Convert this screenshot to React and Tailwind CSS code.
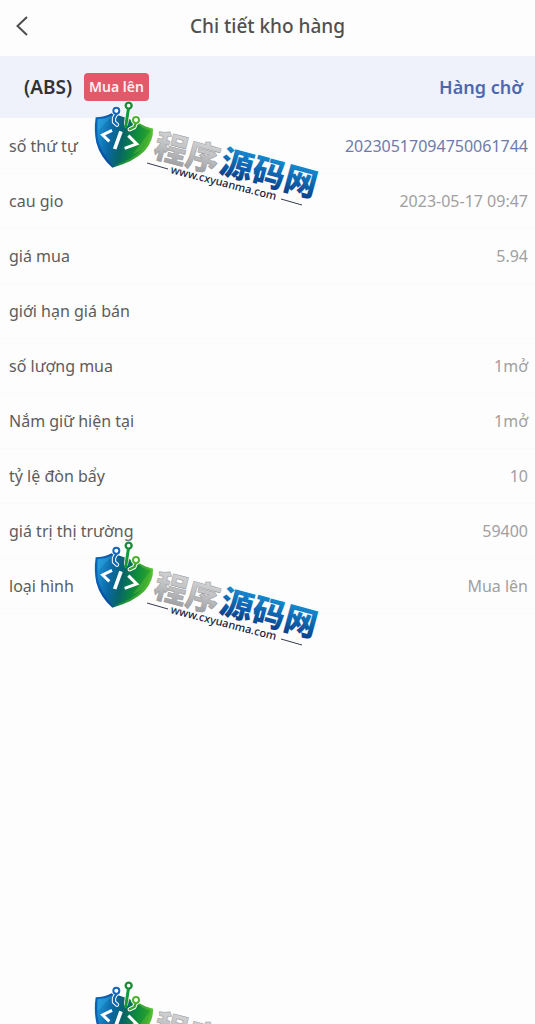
import React from "react";

const rows = [
  { label: "số thứ tự", value: "20230517094750061744", accent: true },
  { label: "cau gio", value: "2023-05-17 09:47" },
  { label: "giá mua", value: "5.94" },
  { label: "giới hạn giá bán", value: "" },
  { label: "số lượng mua", value: "1mở" },
  { label: "Nắm giữ hiện tại", value: "1mở" },
  { label: "tỷ lệ đòn bẩy", value: "10" },
  { label: "giá trị thị trường", value: "59400" },
  { label: "loại hình", value: "Mua lên" },
];

function Watermark({ id }) {
  const blue = `${id}-blue`;
  const silver = `${id}-silver`;
  const rim = `${id}-rim`;
  const face = `${id}-face`;
  return (
    <svg width="240" height="115" viewBox="0 0 240 115" aria-hidden="true">
      <defs>
        <linearGradient id={blue} x1="0" y1="0" x2="0" y2="1">
          <stop offset="0.15" stopColor="#1592d8" />
          <stop offset="0.9" stopColor="#0a3a86" />
        </linearGradient>
        <linearGradient id={silver} x1="0" y1="0" x2="0" y2="1">
          <stop offset="0" stopColor="#dedede" />
          <stop offset="0.5" stopColor="#c0c1c3" />
          <stop offset="1" stopColor="#939497" />
        </linearGradient>
        <linearGradient id={rim} gradientUnits="userSpaceOnUse" x1="10" y1="100" x2="186" y2="130">
          <stop offset="0" stopColor="#0d62b8" />
          <stop offset="0.35" stopColor="#0b4c9c" />
          <stop offset="0.5" stopColor="#12873c" />
          <stop offset="1" stopColor="#5cc22e" />
        </linearGradient>
        <linearGradient id={face} gradientUnits="userSpaceOnUse" x1="14" y1="75" x2="178" y2="110">
          <stop offset="0" stopColor="#1e9bdc" />
          <stop offset="0.3" stopColor="#0b68a6" />
          <stop offset="0.52" stopColor="#076468" />
          <stop offset="0.75" stopColor="#0d8a3c" />
          <stop offset="1" stopColor="#2fa72c" />
        </linearGradient>
      </defs>
      <g transform="translate(1 2) scale(0.3333)" fill="none" strokeLinecap="round" strokeLinejoin="round">
        <path d="M14 52Q40 52 62 40L100 52L143 68Q160 80 186 86Q188 122 160 154Q128 186 64 203Q28 172 16 128Q8 92 14 52Z" fill={`url(#${rim})`} />
        <path d="M20 58Q46 56 66 46L100 57L142 74Q156 86 178 92Q177 121 153 149Q122 180 66 196Q34 165 23 127Q16 96 20 58Z" fill={`url(#${face})`} />
        <path d="M20 58Q46 56 66 46L21 92Z" fill="#3ab5e8" opacity="0.3" />
        <path d="M178 92Q177 121 153 149L124 164Z" fill="#7fcf35" opacity="0.3" />
        <path d="M76 42L69 54V66L78 74M112 28L105 72M134 70L130 81L116 88" stroke="#fff" strokeWidth="13" />
        <g fill="#fff" stroke="#fff" strokeWidth="12">
          <circle cx="76" cy="32" r="9" />
          <circle cx="113" cy="17" r="9" />
          <circle cx="135" cy="60" r="9" />
        </g>
        <path d="M76 42L69 54V66L78 74" stroke="#0c65b5" strokeWidth="7" />
        <path d="M112 28L104 80" stroke="#159a37" strokeWidth="9" />
        <path d="M134 70L130 81L116 88" stroke="#36a52e" strokeWidth="7" />
        <circle cx="76" cy="32" r="9" fill="#fff" stroke="#1767b8" strokeWidth="6" />
        <circle cx="113" cy="17" r="9" fill="#fff" stroke="#168f35" strokeWidth="7" />
        <circle cx="135" cy="60" r="9" fill="#fff" stroke="#4cb32d" strokeWidth="6" />
        <g stroke="#fff" strokeWidth="9" strokeLinecap="butt" strokeLinejoin="miter">
          <path d="M63 91L35 105L55 124" />
          <path d="M90 94L71 147" strokeWidth="11" />
          <path d="M112 107L137 132L101 145" />
        </g>
      </g>
      <g fontFamily='"Noto Sans CJK SC", sans-serif' fontSize="33" fontWeight="900">
        <text transform="translate(62 58) rotate(15)" fill={`url(#${silver})`} stroke="#99999b" strokeWidth="0.5">
          程序
        </text>
        <text transform="translate(128 74) rotate(15)" fill={`url(#${blue})`}>
          源码网
        </text>
      </g>
      <text
        transform="translate(80 75) rotate(14.5)"
        fontFamily='"Noto Sans", sans-serif'
        fontSize="11"
        fontWeight="500"
        fill="#17233f"
      >
        www.cxyuanma.com
      </text>
      <path d="M57 65L78 71M191 101L212 107" stroke="#333b4c" strokeWidth="1" />
    </svg>
  );
}

export default function App() {
  return (
    <div className="relative min-h-screen overflow-hidden bg-[#fdfdfd] font-['Noto_Sans',sans-serif] text-base text-[#5c5c5c]">
      <header className="grid h-14 grid-cols-[48px_1fr_48px] items-center">
        <button type="button" aria-label="Quay lại" className="flex h-full items-center pb-1 pl-4">
          <svg width="12" height="20" viewBox="0 0 12 20" fill="none" stroke="#4d4d4d" strokeWidth="2">
            <path d="M11 1L1.500 10L11 19" />
          </svg>
        </button>
        <h1 className="pb-1 text-center text-[19px] font-medium text-[#505050]">Chi tiết kho hàng</h1>
      </header>

      <main>
        <section className="flex h-[62px] items-center justify-between bg-[#eff2fb] pr-3 pl-6">
          <div className="flex items-center gap-3">
            <h2 className="text-[19px] font-semibold text-[#303236]">(ABS)</h2>
            <span className="rounded-sm bg-[#e2596a] px-[5px] py-1 text-sm leading-5 font-semibold text-[#fdeef0]">Mua lên</span>
          </div>
          <span className="text-lg font-semibold text-[#4d68ae]">Hàng chờ</span>
        </section>

        <dl className="pt-px">
          {rows.map((row) => (
            <div key={row.label} className="flex h-[55px] items-center justify-between border-b border-[#fafafa] pr-[7px] pl-[9px]">
              <dt>{row.label}</dt>
              <dd className={row.accent ? "text-[#6d7bab]" : "text-[#a0a0a0]"}>{row.value}</dd>
            </div>
          ))}
        </dl>
      </main>

      <div className="pointer-events-none absolute inset-0 flex flex-col gap-[325px] overflow-hidden pt-[98px] pl-[90px]">
        {["mark-a", "mark-b", "mark-c"].map((id) => (
          <div key={id} className="h-[115px] shrink-0">
            <Watermark id={id} />
          </div>
        ))}
      </div>
    </div>
  );
}
